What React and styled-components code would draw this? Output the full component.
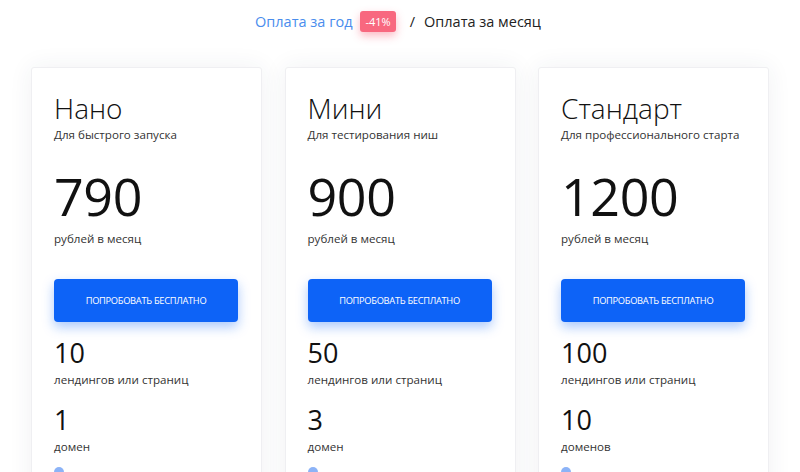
import React from "react";
import styled, { createGlobalStyle } from "styled-components";

const GlobalStyle = createGlobalStyle`
  html, body {
    margin: 0;
    padding: 0;
    background: #ffffff;
    font-family: "Open Sans", "Noto Sans", sans-serif;
    color: #1a1a1a;
  }
`;

const Page = styled.div`
  width: 800px;
  height: 472px;
  overflow: hidden;
  background: #ffffff;
`;

const Switcher = styled.div`
  display: flex;
  align-items: center;
  justify-content: center;
  height: 43px;
  font-size: 14.5px;
  padding-right: 4px;
`;

const PeriodLink = styled.span`
  color: ${(props) => (props.active ? "#4a8ded" : "#222222")};
`;

const Badge = styled.span`
  margin-left: 8px;
  background: #f8687f;
  color: #ffffff;
  font-size: 11px;
  line-height: 15px;
  padding: 3px 5px;
  border-radius: 3px;
  box-shadow: 0 4px 8px rgba(248, 104, 127, 0.45);
`;

const Slash = styled.span`
  margin: 0 9px 0 14px;
  color: #222222;
`;

const Grid = styled.div`
  display: grid;
  grid-template-columns: repeat(3, 231px);
  column-gap: 22.5px;
  justify-content: center;
  padding-top: 24px;
`;

const Card = styled.div`
  background: #ffffff;
  border: 1px solid #efeff2;
  border-radius: 3px;
  box-shadow: 0 0 24px rgba(40, 50, 90, 0.07);
  padding: 22px 22px 0;
  height: 420px;
`;

const Title = styled.h2`
  margin: 0;
  font-weight: 300;
  font-size: 28px;
  line-height: 36px;
  color: #111111;
  white-space: nowrap;
`;

const Subtitle = styled.div`
  margin-top: 1px;
  font-size: 11.6px;
  line-height: 16px;
  color: #333333;
  white-space: nowrap;
`;

const Price = styled.div`
  margin-top: 28px;
  font-size: 52px;
  line-height: 50px;
  color: #111111;
  letter-spacing: -0.4px;
`;

const PriceNote = styled.div`
  margin-top: 11px;
  font-size: 11.6px;
  line-height: 14px;
  color: #333333;
`;

const TryButton = styled.button`
  display: block;
  margin-top: 33px;
  width: 184px;
  height: 43px;
  border: none;
  border-radius: 4px;
  background: #0d63f7;
  color: #ffffff;
  font-family: "Open Sans", sans-serif;
  font-size: 9.3px;
  letter-spacing: -0.3px;
  text-transform: uppercase;
  box-shadow: 0 5px 12px rgba(13, 99, 247, 0.35);
`;

const Feature = styled.div`
  margin-top: ${(props) => props.gap}px;
`;

const FeatureValue = styled.div`
  font-size: 27px;
  line-height: 32px;
  color: #111111;
`;

const FeatureLabel = styled.div`
  margin-top: 3px;
  font-size: 11.6px;
  line-height: 16px;
  color: #333333;
  white-space: nowrap;
`;

const Dot = styled.div`
  margin-top: 12px;
  width: 10px;
  height: 10px;
  border-radius: 50%;
  background: #2d74f0;
  opacity: 0.55;
`;

const plans = [
  {
    name: "Нано",
    note: "Для быстрого запуска",
    price: "790",
    pages: "10",
    domains: "1",
    domainLabel: "домен",
  },
  {
    name: "Мини",
    note: "Для тестирования ниш",
    price: "900",
    pages: "50",
    domains: "3",
    domainLabel: "домен",
  },
  {
    name: "Стандарт",
    note: "Для профессионального старта",
    price: "1200",
    pages: "100",
    domains: "10",
    domainLabel: "доменов",
  },
];

export default function App() {
  return (
    <Page>
      <GlobalStyle />
      <Switcher>
        <PeriodLink active>Оплата за год</PeriodLink>
        <Badge>-41%</Badge>
        <Slash>/</Slash>
        <PeriodLink>Оплата за месяц</PeriodLink>
      </Switcher>
      <Grid>
        {plans.map((plan) => (
          <Card key={plan.name}>
            <Title>{plan.name}</Title>
            <Subtitle>{plan.note}</Subtitle>
            <Price>{plan.price}</Price>
            <PriceNote>рублей в месяц</PriceNote>
            <TryButton>Попробовать бесплатно</TryButton>
            <Feature gap={15}>
              <FeatureValue>{plan.pages}</FeatureValue>
              <FeatureLabel>лендингов или страниц</FeatureLabel>
            </Feature>
            <Feature gap={16}>
              <FeatureValue>{plan.domains}</FeatureValue>
              <FeatureLabel>{plan.domainLabel}</FeatureLabel>
            </Feature>
            <Dot />
          </Card>
        ))}
      </Grid>
    </Page>
  );
}
